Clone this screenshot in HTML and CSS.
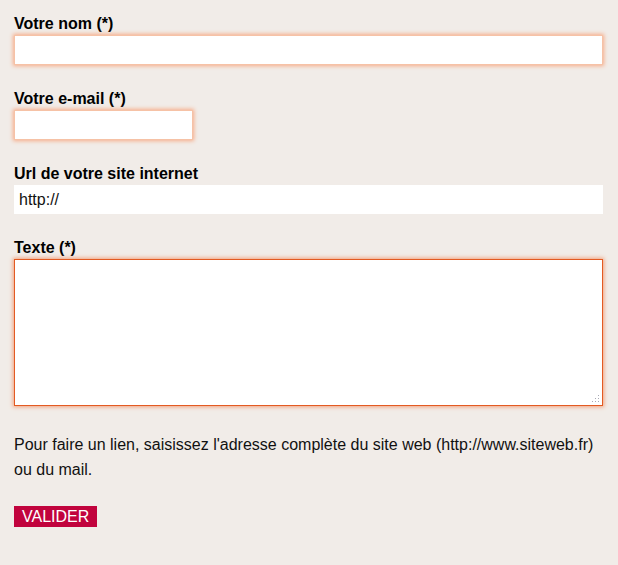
FILE: index.html
```html
<!DOCTYPE html>
<html lang="fr">
<head>
<meta charset="utf-8">
<title>Formulaire</title>
<link rel="stylesheet" href="styles.css">
</head>
<body>
<form class="form">
  <div class="field">
    <label class="label" for="nom">Votre nom (*)</label>
    <input class="input input-glow input-wide" id="nom" type="text">
  </div>
  <div class="field">
    <label class="label" for="mail">Votre e-mail (*)</label>
    <input class="input input-glow input-short" id="mail" type="text">
  </div>
  <div class="field">
    <label class="label" for="url">Url de votre site internet</label>
    <input class="input input-plain input-wide" id="url" type="text" value="http://">
  </div>
  <div class="field field-text">
    <label class="label" for="texte">Texte (*)</label>
    <div class="area-wrap">
      <textarea class="area" id="texte"></textarea>
      <svg class="grip" width="8" height="8" viewBox="0 0 8 8" aria-hidden="true">
        <rect x="6" y="0" width="1" height="1" fill="#a9a9b4"/>
        <rect x="6" y="3" width="1" height="1" fill="#a9a9b4"/>
        <rect x="3" y="3" width="1" height="1" fill="#a9a9b4"/>
        <rect x="6" y="6" width="1" height="1" fill="#a9a9b4"/>
        <rect x="3" y="6" width="1" height="1" fill="#a9a9b4"/>
        <rect x="0" y="6" width="1" height="1" fill="#a9a9b4"/>
      </svg>
    </div>
  </div>
  <p class="note">Pour faire un lien, saisissez l'adresse complète du site web (http://www.siteweb.fr) ou du mail.</p>
  <button class="submit" type="button">VALIDER</button>
</form>
</body>
</html>
```
FILE: styles.css
```css
html, body {
  margin: 0;
  padding: 0;
  background: #f1ece8;
}
body {
  font-family: "Liberation Sans", Arial, sans-serif;
  color: #000;
}
.form {
  padding: 14px 15px 0 14px;
  width: 589px;
}
.field {
  display: flex;
  flex-direction: column;
  margin-bottom: 24px;
}
.label {
  font-size: 16px;
  font-weight: bold;
  line-height: 20px;
  margin-bottom: 1px;
}
.input {
  box-sizing: border-box;
  height: 30px;
  margin: 0;
  font-family: "Liberation Sans", Arial, sans-serif;
  font-size: 16px;
  color: #111;
  background: #fff;
  outline: none;
}
.input-wide { width: 589px; }
.input-short { width: 179px; }
.input-glow {
  border: 1px solid #f6c2a6;
  box-shadow: 0 0 4px 1px #f7ab88;
}
.input-plain {
  height: 29px;
  border: none;
  padding: 0 0 0 5px;
}
.field-text { margin-bottom: 26px; }
.area-wrap {
  position: relative;
  width: 589px;
  height: 147px;
}
.area {
  box-sizing: border-box;
  display: block;
  width: 589px;
  height: 147px;
  margin: 0;
  border: 1px solid #e35a22;
  box-shadow: 0 0 4px 1px #f3a07a;
  background: #fff;
  resize: none;
  outline: none;
}
.grip {
  position: absolute;
  right: 3px;
  bottom: 3px;
}
.note {
  margin: 0 0 24px 0;
  font-size: 16px;
  line-height: 25px;
  color: #111;
}
.submit {
  display: block;
  height: 21px;
  padding: 0 8px;
  margin: 0;
  border: none;
  background: #c1033d;
  color: #fff;
  font-family: "Liberation Sans", Arial, sans-serif;
  font-size: 16px;
  line-height: 21px;
  cursor: pointer;
}
```
